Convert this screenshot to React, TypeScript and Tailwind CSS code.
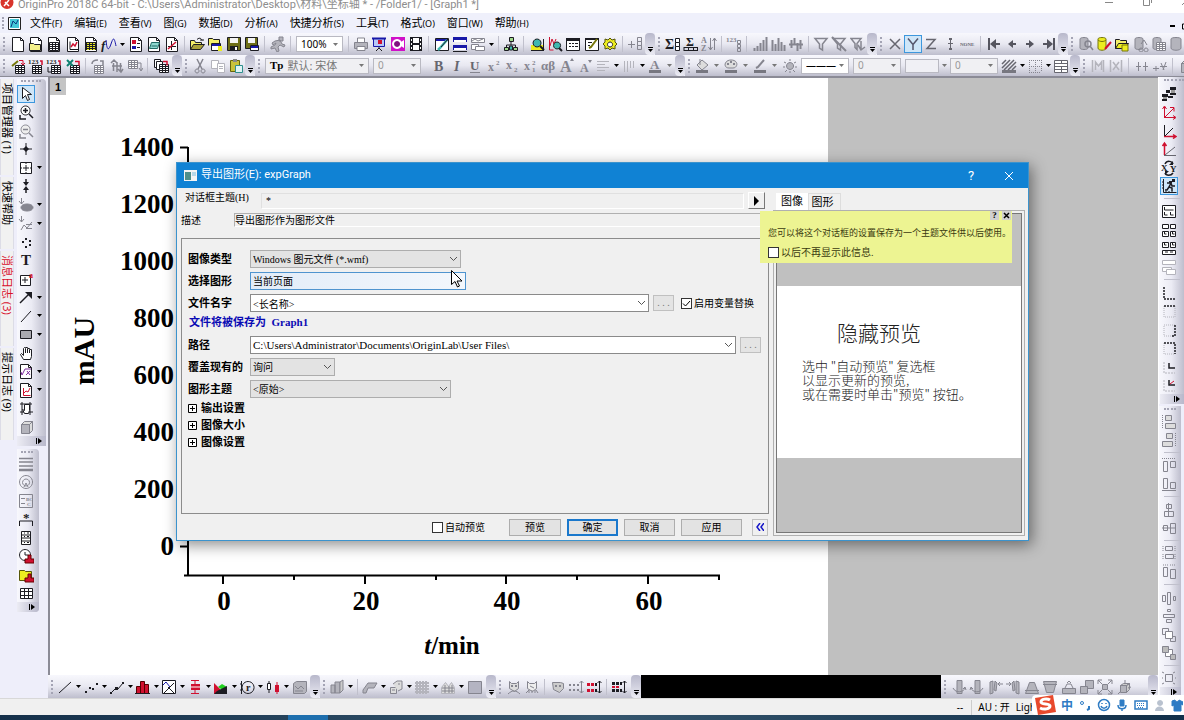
import type { ReactNode } from "react"
import clsx from "clsx"

type Shape = { d?: string; fill?: string; stroke?: string; w?: number; dash?: string; t?: string; x?: number; y?: number; size?: number; font?: string }

const K = "#1c1c22"
const G = "#85858f"
const L = "#b4b4bc"
const R = "#d01030"
const Y = "#ecec20"
const B = "#1818a8"
const T = "#3fb8b0"

// s = stroked path, f = filled path, t = a character
const s = (d: string, stroke = K, w = 1, dash?: string): Shape => ({ d, stroke, w, dash, fill: "none" })
const f = (d: string, fill = K, stroke = "none"): Shape => ({ d, fill, stroke })
const t = (text: string, x: number, y: number, size: number, fill = K, font = "bold"): Shape => ({ t: text, x, y, size, fill, font })

const page = (...more: Shape[]) => [f("M2.5 1.5h8l3 3v11h-11z", "#fff", K), s("M10.5 1.5v3h3"), ...more]
const table = (x: number, y: number, c = K) => [
  f(`M${x} ${y}h9v8h-9z`, "#fff", c),
  s(`M${x} ${y + 2}h9M${x} ${y + 4}h9M${x} ${y + 6}h9M${x + 3} ${y}v8M${x + 6} ${y}v8`, c),
]
const bars = (c: string) => [s("M2.5 15v-3M5.5 15v-5M8.5 15v-8M11.5 15v-11M14.5 15v-14", c, 2)]
const box = (x: number, y: number, w: number, h: number, fill = "none", c = G) => f(`M${x}.5 ${y}.5h${w}v${h}h-${w}z`, fill, c)
const funnel = s("M2 2.5h12l-4.5 5.5v6l-3-2v-4z", G, 1.5)
const lens = (c: string) => s("M13 8a3 3 0 1 1-6 0a3 3 0 1 1 6 0M12 10l3 4", c, 1.5)
const axes = (y: string, x: string) => [s("M3.5 14V3M1.5 5l2-3 2 3", y), s("M3 13.5h11M12 11.5l3 2-3 2", x)]

const icons: Record<string, Shape[]> = {
  project: page(),
  folder: page(f("M1.5 7.5h4l1 1h6v6h-11z", "#f4f08a", K)),
  worksheet: page(...table(3.5, 6.5)),
  graph: page(s("M5 5.5v8h8"), s("M6 11l2-3 2 2 2-4", R, 1.5)),
  matrix: page(f("M3 6h10v8h-10z", Y), s("M3.5 6v8M6.5 6v8M9.5 6v8M12.5 6v8M3 6.5h10M3 8.5h10M3 10.5h10M3 12.5h10")),
  func: [s("M5 4c1 12 3 10 5 4s3-8 5 2", B), t("f", 0, 14, 13, K, "italic bold")],
  layout: page(f("M4 4h4v4h-4z", R), f("M4 10h4v3h-4z", B), s("M9 7.5h3M9 11.5h3")),
  notes: page(f("M3.5 12.5l2-6h8l-2 6z", "#8fd8d0", "#216b66"), s("M5.5 10h6", "#216b66")),
  digitize: page(s("M7.5 5v9M4 10.5h8"), s("M4 13l8-7", R, 1.5)),
  open: [f("M1.5 13.5v-9h4l1 2h6v2", "#f3ee6a", K), f("M1.5 13.5l3-5h11l-4 5z", "#a9a03a", K), s("M8 3.5c3-3 5 0 5 1M11 4h4")],
  openTpl: [f("M1.5 9.5v-7h4l1 1h6v4", "#f3ee6a", K), f("M4.5 7.5h9v7h-9z", "#fff", K), f("M5 8h8v2h-8z", B), f("M11 10h4v5h-4z", Y)],
  save: [f("M1.5 1.5h13v13h-13z", "#6e6e18", K), f("M4 2h8v5h-8z", "#f3f3f3"), f("M4 10h8v5h-8z", K), f("M9 11h2v3h-2z", "#fff")],
  saveTpl: [f("M1.5 1.5h12v11h-12z", "#6e6e18", K), f("M4 2h7v5h-7z", "#f3f3f3"), f("M6.5 9.5h8v5h-8z", "#fff", K), f("M7 10h7v2h-7z", B)],
  runner: [f("M9 1h4v4h-4zM5 5l5-1 2 4 3 1-1 2-4-2-2 2 1 4-2 1-2-4-4 1v-2l4-2 1-2-3 2-1-2z", L, G)],
  print: [f("M4.5 6v-4h7v4", "#fff", G), f("M1.5 6.5h13v6h-13z", L, G), f("M4 10.5h8v4h-8z", "#fff", G)],
  slide: [f("M2.5 2.5h11v8h-11z", "#b8c8f8", B), s("M1 2.5h14", B, 2), s("M8 11v2M5 15l3-3 3 3"), f("M7 4h4v4h-4z", R)],
  movie: [f("M1 1h14v14h-14z", "#d010c8"), f("M7 3a5 5 0 1 0 .1 0z", "#fff"), f("M7 5a3 3 0 1 0 .1 0z", "#801080"), f("M11 6l3-2v8l-3-2z", "#fff")],
  film: [f("M2 1h12v14h-12z"), f("M5 2h6v5h-6zM5 9h6v5h-6zM3 3h1v2h-1zM3 7h1v2h-1zM3 11h1v2h-1zM12 3h1v2h-1zM12 7h1v2h-1zM12 11h1v2h-1z", "#fff")],
  edit: [f("M1.5 2.5h13v12h-13z", "#fff", K), f("M2 3h12v2h-12z", B), s("M13 4L6 12l-2 2", T, 2.5), s("M14 3L7 11")],
  split: [f("M1 1h14v5h-14zM1 9h14v5h-14z", B), f("M2 4h12v2h-12zM2 12h12v2h-12z", "#fff"), s("M1 15.5h14")],
  windows: [box(1, 2, 13, 4, "#fff"), box(1, 8, 7, 5, "#fff"), box(5, 10, 9, 4, "#fff"), s("M2 5l3-2 3 2 5-2", G)],
  tree: [s("M8 5v4M3.5 12V9h9v3"), f("M6.5 1.5h4v4h-4zM1.5 11.5h4v3h-4zM10.5 11.5h4v3h-4z", "#9fd88a", K), f("M6.5 10h3v4h-3z", T, K)],
  zoomData: [f("M2 9h13v5h-13z", Y), s("M2 14.5h13M14.5 3v12"), f("M8 3a4 4 0 1 0 .1 0z", T, K), s("M11 10l4 4", K, 2)],
  zoomGraph: [s("M2.5 1v13h4", R), s("M3 10l2-7 2 5 2-5", R), f("M10 6a3.5 3.5 0 1 0 .1 0z", T, K), s("M12 12l3 3", K, 2)],
  results: [f("M1.5 2.5h13v12h-13z", "#fff", K), f("M1 2h14v3h-14z"), s("M4 7.5h2M7 7.5h2M10 7.5h3M4 10.5h2M7 10.5h2M10 10.5h3")],
  script: [f("M1.5 2.5h13v12h-13z", "#fff", K), f("M1 2h14v2h-14z"), s("M13 3l-6 8-2 1", "#77770a", 2), s("M4 6.5h4M4 9.5h2")],
  gear: [f("M8 2l2 2 3-1v3l2 2-2 2v3l-3-1-2 2-2-2-3 1v-3l-2-2 2-2v-3l3 1z", Y, "#55550a"), f("M8 6a2.5 2.5 0 1 0 .1 0z", "#fff", K)],
  addCol: [s("M0 8.5h7M3.5 5v7", G), ...[1, 5, 9].map((y) => box(9, y, 4, 4))],
  sumCols: [t("Σ", 0, 13, 14), ...[2, 6, 10].map((y) => box(10, y, 4, 4, "#fff", K))],
  sumRows: [t("Σ", 3, 10, 12), s("M1 14.5h14M1 11.5h14M1 11v4M5.5 11v4M10.5 11v4M14.5 11v4")],
  sort: [t("A", 0, 7, 8, G), t("Z", 0, 15, 8, G), s("M9.5 2v12M7.5 11l2 3 2-3M13.5 14V2M11.5 5l2-3 2 3", G)],
  setVals: [t("123", 0, 6, 7, G), ...[4, 8, 12].map((y) => box(11, y, 3, 3))],
  stats1: bars(G),
  stats2: [s("M2.5 15V4M5.5 15v-7M8.5 15V2M11.5 15v-9M14.5 15v-6", G, 2)],
  stats3: [s("M1 8.5h14M3.5 4v8M6.5 2v7M9.5 7v8M12.5 4v9", G, 2)],
  filter: [funnel],
  filterOff: [funnel, s("M1 1l14 14", G, 2)],
  filterRun: [s("M1 2.5h10l-4 5v6l-2-2v-4z", G, 1.5), s("M11 5v8M8 9l3 5 4-3", G, 1.5)],
  x: [s("M3 3l10 10M13 3L3 13", "#66666f", 1.5)],
  y: [s("M3 2.5l5 6v5.5M13 2.5l-5 6", "#55556a", 1.5)],
  z: [s("M3 3.5h9L4 12.5h9", "#66666f", 1.5)],
  err: [s("M8.5 2v12M6 7.5h5", "#66666f"), f("M7 2h3v2h-3zM7 12h3v2h-3z", "#66666f")],
  none: [t("NONE", 0, 10, 5, "#66666f")],
  first: [s("M3 2v12M14 8H7", "#55555f", 2), f("M4 8l6-5v10z", "#55555f")],
  prev: [f("M4 8l5-4v3h3v2h-3v3z", "#55555f")],
  next: [f("M12 8l-5-4v3h-3v2h3v3z", "#55555f")],
  last: [s("M13 2v12M2 8h7", "#55555f", 2), f("M12 8l-6-5v10z", "#55555f")],
  db: [f("M2 3c0-2 8-2 8 0v9c0 2-8 2-8 0z", L, G), lens(G)],
  dbEdit: [f("M2 3c0-2 8-2 8 0v9c0 3-8 3-8 0z", Y, "#77770a"), s("M2 4c2 2 6 2 8 0", "#77770a"), s("M15 6l-6 7", R, 2)],
  dbOpen: [f("M1.5 12.5v-9h4l1 1h6v3", "#f3ee6a", K), f("M1.5 12.5l3-5h10l-3 5z", Y, K), f("M8 9h6v6h-6z", Y, "#77770a")],
  dbSql: [f("M2 3c0-2 8-2 8 0v9c0 2-8 2-8 0z", L, G), s("M8 12a2 2 0 1 0 .1 0M13 12a2 2 0 1 0 .1 0M8 8l3-4 3 5", G)],
  dbTable: [f("M2 3c0-2 8-2 8 0v9c0 2-8 2-8 0z", L, G), ...table(5.5, 6.5, G)],
  dbPlain: [f("M2 3c0-2 10-2 10 0v9c0 3-10 3-10 0z", L, G)],
  import1: [...table(5.5, 7.5), s("M2 8l6-5", "#77770a", 2), s("M9 2.5h4v4M11 5l2 2 2-2", R)],
  import2: [...table(4.5, 7.5), t("123", 0, 6, 7), s("M12 3h2v4", R, 1.5)],
  import3: [...table(5.5, 7.5), t("123", 0, 6, 7), s("M12 3h2v4", R, 1.5), s("M2 9v5h3")],
  importXl: [...table(5.5, 7.5), s("M2 2l6 6M8 2l-6 6", "#108070", 2), s("M10 3.5h4v4", R, 1.5)],
  reimp1: [...table(4.5, 7.5, G), s("M2 6c0-4 4-4 6-4M10 3h3v4", G, 1.5)],
  reimp2: [s("M3 8h10M4.5 5v8M8 4v10M11.5 5v8M2 5l3-3 3 3M9 11l3 3 2-3", G, 1.5)],
  reimp3: [...table(1.5, 2.5, G), s("M11 5h3v7M12 10l2 3 2-3", G)],
  batch: [box(1, 1, 6, 8, "#fff", K), box(3, 3, 6, 8, "#fff", K), ...table(6.5, 6.5), s("M10 3.5h4v4", R, 1.5)],
  cut: [s("M5 1l5 10M11 1L6 11", G, 1.5), s("M5 11a2 2 0 1 0 .1 0M11 11a2 2 0 1 0 .1 0", G)],
  copy: [box(1, 2, 7, 8, "#fff", L), box(7, 5, 7, 9, "#fff", L), s("M9 8.5h4M9 10.5h4", L)],
  paste: [f("M2.5 2.5h9v11h-9z", "#c9c23a", "#66660a"), f("M5 1h4v3h-4z", "#888"), f("M7.5 7.5h7v7h-7z", "#dff4f4", "#2f8f8f")],
  bold: [t("B", 3, 13, 14, "#66666f")],
  italic: [t("I", 5, 13, 14, "#66666f", "italic bold")],
  underline: [t("U", 3, 12, 13, "#66666f"), s("M3 14.5h10", G)],
  sup: [t("x", 2, 13, 12, G), t("2", 10, 7, 7, G)],
  sub: [t("x", 2, 11, 12, G), t("2", 10, 14, 7, G)],
  supsub: [t("x", 2, 12, 12, G), t("2", 10, 7, 7, G), t("1", 10, 14, 7, G)],
  greek: [t("αβ", 0, 12, 13, G)],
  bigger: [t("A", 1, 14, 16, G), f("M11 3l2-3 2 3z", G)],
  smaller: [t("A", 3, 14, 12, G), f("M11 2h4l-2 3z", G)],
  align: [s("M2 3.5h12M2 6.5h8M2 9.5h12M2 12.5h8", L)],
  valign: [s("M3.5 3v11M6.5 3v11M9.5 3v7M12.5 3v7", L)],
  fontColor: [t("A", 3, 11, 13, G), f("M2 12h12v3h-12z", "#777780")],
  fill: [f("M3 7l5-5 6 5-6 5z", "#ddd", G), s("M6 1v6", G), f("M2 12h12v3h-12z", "#777780")],
  palette: [f("M8 2c8 0 7 8 2 8h-4c-6 0-5-8 2-8z", "#ddd", G), s("M4 6h2M7 4h2M10 6h2", G, 2), f("M2 12h12v3h-12z", "#777780")],
  lineColor: [s("M12 2L6 9l-2 1", G, 2), f("M2 12h12v3h-12z", "#777780")],
  lamp: [f("M8 4.5a3.5 3.5 0 1 0 .1 0z", L, G), s("M8 1v2M2 4l2 1M14 4l-2 1M1 9h2M15 9h-2M3 14l2-2M13 14l-2-2M8 13v2", G)],
  hatch: [s("M1 6l4-4M1 10l8-8M3 12l10-10M7 12l8-8M11 12l4-4", "#66666f", 1.5), f("M1 12h14v3h-14z", "#777780")],
  border: [s("M2.5 2v12M8.5 2v12M14.5 2v12M2 2.5h12M2 8.5h12M2 14.5h12", G, 1, "1 1")],
  cells: [f("M1.5 2.5h13v12h-13z", "#fff", "#66666f"), s("M1 5.5h14M1 8.5h14M1 11.5h14M8.5 2v4M8.5 9v6", "#66666f")],
  mask1: [s("M2.5 2v12M13.5 2v12M5.5 12V4l3 4 3-4v8", L, 1.5)],
  mask2: [s("M2.5 2v12M13.5 2v12M5 4l6 8M11 4l-6 8", L, 1.5)],
  move1: [s("M4.5 4v9M2 8.5h5M11.5 4v9M9 8.5h5", G)],
  move2: [s("M1 10.5h6M4 8v5M8 8.5h7M9 5l3 7M14 4l-3 8", G)],
  // tools dock
  pointer: [f("M4.5 1.5v11l3-3 2 5 2-1-2-5h4z", "#fff", K)],
  zoomIn: [f("M7.5 2a4.5 4.5 0 1 0 .1 0z", "#fff", K), s("M5 6.5h5M7.5 4v5M11 10l4 4M2 11v4h6", K, 1.5)],
  zoomOut: [f("M7.5 2a4.5 4.5 0 1 0 .1 0z", "#eee", G), s("M5 6.5h5M11 10l4 4M2 11v4h6", G, 1.5)],
  reader: [s("M8 2v12M2 8h12"), f("M8 5l3 3-3 3-3-3z")],
  screen: [box(2, 2, 11, 11, "#fff", K), s("M5 8h6M8 5v6M2 8h2M12 8h2M8 2v2M8 12v2")],
  cursor: [f("M5 4h6l-3 4zM5 12h6l-3-4z"), s("M8 1v3M8 12v3", K, 1.5)],
  selArea: [f("M9 7c8 0 8 7 0 7s-8-7 0-7z", G, G), s("M3.5 1v6M1 4l2.5 3L6 4", G)],
  maskArea: [s("M3.5 1v6M1 4l2.5 3L6 4", G), s("M3 15l3-5 3 3 5-6M8 9.5h6M8 13.5h6", G)],
  draw: [f("M4 7h2v2h-2zM7 4h2v2h-2zM11 6h2v2h-2zM11 10h2v2h-2zM7 12h2v2h-2z")],
  text: [t("T", 3, 13, 15)],
  annotate: [box(2, 4, 10, 10, "#fff", K), s("M4 9h6M7 6v6"), t("a", 11, 7, 8, R)],
  arrow: [s("M2 14L12 4", K, 1.5), f("M7 3h7v7z")],
  line: [s("M3 14L13 3")],
  rect: [f("M2.5 4.5h11v8h-11z", "#aaaab0", K)],
  hand: [f("M5.5 14.5l-3-5 1-1 2 2v-7l1-1 1 1v-1h2v1h2v1h2v7l-1 3z", "#fff", K), s("M7.5 4v4M9.5 4v4M11.5 5v3")],
  formula: page(s("M3 9l1 3 3-6h6", "#8030a0"), s("M8 12l4-4M9 8l3 4", "#8030a0")),
  newGraph: page(s("M5.5 6v7.5h7", R), s("M6 11l2-2 2 1 2-4", R)),
  pan: [s("M2 4h12M2 12h13M4 2v13M12 2v13"), f("M6.5 13.5l-2-4 2 1v-6h5v6l-1 3z", "#fff", K)],
  cube: [f("M3.5 5.5h8v9h-8z", L, G), f("M3.5 5.5l3-3h8l-3 3zM11.5 5.5l3-3v9l-3 3z", "#ddd", G)],
  lines: [s("M1 2.5h14M1 6h14M1 10h14", G, 1.5), s("M1 14h14", G, 2.5)],
  ring: [s("M8 1.5a6.500 6.500 0 1 0 .1 0M8 5a3.500 3.500 0 1 0 .1 0M6 13l2-4 2 4", G)],
  legend: [box(1, 1, 13, 13), s("M3 5.5h4M3 10.5h4", G), t("BC", 8, 8, 5, G), t("C", 9, 13, 5, G)],
  bracket: [t("*", 5, 11, 13), s("M1.5 15v-5h13v5")],
  colorScale: [box(3, 1, 9, 13, "#fff", K), s("M3 5h10M3 8h10M3 11h10M6 3h1M9 3h2M6 6.5h1M9 6.5h2M6 12.5h1M9 12.5h2")],
  clock: [f("M7 1.5a5.500 5.500 0 1 0 .1 0z", "#fff", K), s("M7 4v3h3"), f("M10 7h3v4h3v4h-9v-4h3z", R, "#600")],
  stamp: [f("M1.5 3.5h5l1 1h6v9h-12z", Y, "#55550a"), f("M10 7h3v4h3v4h-9v-4h3z", R, "#600")],
  newTable: [f("M2.5 3.5h12v10h-12z", "#fff", K), s("M2 6.5h12M2 10.5h12M6.5 3v10M10.5 3v10")],
  // right dock
  antialias: [f("M9 1h6v3h-6zM5 4h4v3h-4zM9 7h6v2h-6zM1 8h6v3h-6zM7 10h5v2h-5zM1 13h5v2h-5z"), f("M10 4h4v3h-4zM2 11h4v2h-4z", "#999")],
  axis1: [...axes(R, R), s("M4 13l9-9M9 3.500h4v4", R)],
  axis2: [s("M3.5 2v12"), s("M3 13.5h11M12 11.5l3 2-3 2", R, 1.5), s("M4 13l8-8")],
  axis3: [s("M3.5 14V3M1.5 5l2-3 2 3", R, 1.5), s("M3 14.5h12M4 14l10-8", "#66666f")],
  exchange: [t("X", 0, 11, 9), t("Y", 9, 12, 9), s("M4 4c2-4 7-3 8 0M12 13c-2 3-7 3-8 0", K, 1.5), f("M12 1v4h-4zM4 15v-4h4z")],
  speed: [s("M2.5 1v13.5h13"), s("M1 4h2M1 7h2M1 10h2M5 13v2M8 13v2M11 13v2"), f("M11 1h3v3h-3zM8 3h3v2h-3z"), s("M6 5h4l-2 4 3 1v3M8 9l-2 3h-2M10 5l1 3h3", K, 1.5)],
  layer1: [box(1, 2, 13, 12, "#fff", K), s("M3.5 4v3h9M3.5 9v3h3M9.5 9v3h3", K)],
  layer2: [box(1, 2, 6, 4, "#fff", K), box(9, 2, 5, 4, "#fff", K), box(1, 9, 6, 5, "#fff", K), box(9, 9, 5, 5, "#fff", K), s("M3.5 10v2h2M11.5 10v2h2")],
  layer3: [box(1, 2, 6, 5, "#fff", K), box(9, 2, 5, 5, "#fff", K), box(1, 10, 13, 4, "#fff", K), s("M3.5 3v2h2M11.5 3v2h2M4 12h3M9 12h3")],
  layer4: [box(1, 1, 13, 4, "#fff", L), box(1, 8, 9, 4, "#fff", L), box(5, 10, 9, 5, "#fff", L)],
  addL: [s("M3 2v12h12", K, 1.5, "2 1")],
  addT: [s("M3 3v11h11V3", L, 1, "1 1"), s("M3 3h12", K, 1.5, "2 1")],
  addR: [s("M14 3H3v11h9", L, 1, "1 1"), s("M14 3v11h-3", K, 1.5, "2 1")],
  addBox: [s("M3 3v11h11", L, 1, "1 1"), s("M3 3h11v11", K, 1.5, "2 1")],
  addInset: [s("M3 3v11h11", L, 1, "2 1"), s("M8 4v5h6", K, 1.5)],
  addInset2: [s("M3 3v11h11", L, 1, "2 1"), s("M8 3v5h6", K, 1.5), s("M9 7l4-3", R)],
  alignL: [box(4, 1, 6, 5, "#ddd"), box(4, 9, 10, 5, "#ddd"), s("M1.5 1v14", G, 1, "1 1")],
  alignR: [box(5, 1, 6, 5, "#ddd"), box(1, 9, 10, 5, "#ddd"), s("M14.5 1v14", G, 1, "1 1")],
  alignT: [box(2, 4, 4, 10), box(9, 4, 5, 6), s("M1 1.5h14", G, 1, "1 1")],
  alignB: [box(2, 2, 4, 10), box(9, 6, 5, 6), s("M1 14.5h14", G)],
  alignH: [box(5, 2, 5, 4), box(3, 9, 9, 5), s("M7.5 1v14", G)],
  alignV: [box(2, 5, 4, 5), box(9, 3, 5, 10), s("M1 8h14", G)],
  sameW: [box(4, 1, 7, 4), box(4, 9, 8, 4), s("M2 1v5M2 9v5M14 1v5M14 9v5", G, 1, "1 1")],
  sameH: [box(2, 3, 4, 9), box(9, 5, 5, 9), s("M2 1h5M9 1h5", G, 1, "1 1")],
  distH: [box(1, 5, 3, 6), box(6, 2, 3, 12), box(12, 6, 2, 4)],
  distV: [box(6, 1, 3, 2), box(2, 6, 11, 3), box(5, 11, 5, 3)],
  front: [box(1, 1, 6, 6), box(9, 9, 5, 5), box(4, 4, 7, 7, "#fff")],
  back: [box(4, 4, 7, 7, "#fff"), box(1, 1, 6, 6, "#bbb"), box(9, 9, 5, 5, "#bbb")],
  group: [box(4, 4, 7, 7), s("M1 2l2 1M14 2l-2 1M1 14l2-1M14 14l-2-1M1 8h1M14 8h1", G)],
  // plot bar
  pLine: [s("M2 14L14 3")],
  pDots: [f("M2 12h2v2h-2zM6 8h2v2h-2zM9 9h2v2h-2zM13 4h2v2h-2z")],
  pBoth: [s("M2 14l5-5 2 1 5-6"), f("M1 13h2v2h-2zM6 8h3v3h-3zM13 3h2v2h-2z")],
  pCol: [f("M1.5 7.5h4v7h-4zM5.500 2.500h4v12h-4zM9.500 5.500h4v9h-4z", R, "#500"), s("M0 14.5h15")],
  pMulti: [f("M1.5 1.5h13v13h-13z", "#fff", K), s("M2 6l3-3 4 5 4-4", B), s("M3 14l10-10M7 8l6 6")],
  pBox: [s("M8 1v14M4 1.5h8M4 14.5h8", R), f("M4 5h9v6h-9z", R), s("M4 8h9", "#fff")],
  pArea: [f("M1 4l6 6v5h-6z", R), f("M5 8l4-3 5 3-3 4z", "#20d020"), f("M4 12l10-5v8h-13z")],
  pPolar: [s("M2.5 2v13M1 5h2M1 11h2M9 2.5a6 6 0 1 0 .1 0"), t("r", 7, 12, 10)],
  pStock: [f("M2.5 4.5h3v6h-3z", "#fff", K), s("M4 2v3M4 11v3"), s("M12 3v12", R), f("M10 6h4v7h-4z", R)],
  pTpl: [f("M1.5 4.5l3-2h10v10l-2 2h-11z", L, G), s("M3 7l3 3 3-3 3 3M3 12h8", G)],
  p3d: [f("M2 6h4v8h-4zM6 3h5v11h-5z", L, G), f("M11 3l3-2v10l-3 3z", "#ccc", G)],
  p3dRibbon: [f("M1 11l5-7h9l-3 5h-6l-2 5h-3z", L, G)],
  p3dSurf: [f("M2.500 8.500h6v6h-6z", "#ddd", G), f("M5 5l4-3h5v8l-4 2", "#ddd", G), s("M4 11h3M10 5h2", G)],
  p3dGrid: [s("M1 4h14M1 7h14M1 10h14M1 13h14M3 2v13M6 2v13M9 2v13M12 2v13", L, 2)],
  pHeat: [f("M1.500 14.500v-6l4-5 3 4 3-4 3 5v6z", "#ddd", L), s("M2 9h12M2 12h12M5 6v8M9 7v7M12 6v8", G)],
  pImage: [f("M1.500 2.500h13v12h-13z", "#b4b4c2", G)],
  m1: [f("M3.500 2.500l2 2h5l2-2v7l-4 3-5-3z", "#ddd", G), f("M5 6h2v2h-2zM9 6h2v2h-2z", G), s("M2 15c4-4 8-4 12 0", G)],
  m2: [f("M3.500 2.500l2 2h5l2-2v7l-4 3-5-3z", "#eee", G), s("M2 14l3-3M5 14v-3M8 14v-3M11 14v-3M14 14l-2-3M6 7l4 2", G)],
  m3: [f("M2.500 3.500h8l3 1v5l-4 4-6-3z", "#ccc", G), f("M5 6h2v2h-2zM9 6h2v2h-2z", G)],
  m4: [f("M1 5h2v2h-2zM5 5h2v2h-2zM9 5h2v2h-2zM1 10h2v2h-2zM5 10h2v2h-2zM9 10h2v2h-2z", G), s("M13.500 2v12M11.500 4l2-2 2 2M11.500 12l2 2 2-2", G)],
  m5: [f("M1 4h3v3h-3zM5 4h3v3h-3zM1 10h3v3h-3zM5 10h3v3h-3z", R), f("M9 4h2v3h-2zM9 10h2v3h-2z"), s("M13.500 2v12M11.500 4l2-2 2 2M11.500 12l2 2 2-2")],
  m6: [f("M1 7h3v2h-3zM5 7h3v2h-3z", R), f("M1 3h3v3h-3zM5 3h3v3h-3zM1 10h3v3h-3zM5 10h3v3h-3zM9 3h2v3h-2zM9 10h2v3h-2z"), s("M13.500 2v12M11.500 4l2-2 2 2M11.500 12l2 2 2-2")],
  r1: [f("M6 1.500h5v13h-5z", L, G), s("M2 9c3 6 11 4 12 0M12 10l2-2 1 3", G)],
  r2: [f("M6 1.500h5v13h-5z", L, G), s("M14 9c-3 6-11 4-12 0M1 11l1-3 2 2", G)],
  r3: [f("M3 3l3-1v12l-3 1z", L, G), f("M8 2l2 2-1 8-2-1z", L, G), s("M16 5h-5M13 3l-2 2 2 2", G)],
  r4: [f("M13 3l-3-1v12l3 1z", L, G), f("M8 2l-2 2 1 8 2-1z", L, G), s("M0 5h5M3 3l2 2-2 2", G)],
  r5: [f("M1.500 14.500l4-11h5l4 11z", L, G), s("M1 11.500h14", G)],
  r6: [f("M1.500 2.500h13l-3 11h-7z", L, G), s("M1 5.500h14", G)],
  r7: [f("M1.500 9.500h13v5h-13z", L, G), s("M4 9l2-4h4l2 4M6 4l2-2 2 2", G)],
  r8: [f("M6.500 1.500h8v8h-8z", L, G), f("M1.500 7.500h7v7h-7z", L, G)],
  r9: [f("M5.500 5.500h5v5h-5z", L, G), s("M1 1l4 4M15 1l-4 4M1 15l4-4M15 15l-4-4M1 5V1h4M11 1h4v4M1 11v4h4M11 15h4v-4", G)],
  r10: [f("M4.500 6.500h6v7h-6z", L, G), f("M4.500 6.500l3-2h6l-3 2zM10.500 6.500l3-2v6l-3 3z", "#ccc", G), s("M9 1v4M12 9l3-1M4 13l-2 2", G)],
}

function Icon({ name }: { name: string }) {
  return (
    <svg viewBox="0 0 16 16" className="h-4 w-4 shrink-0" aria-hidden="true">
      {icons[name].map((p, i) =>
        p.t ? (
          <text key={i} x={p.x} y={p.y} fontSize={p.size} fill={p.fill} fontFamily="Liberation Serif" fontWeight="700" fontStyle={p.font?.includes("italic") ? "italic" : "normal"}>
            {p.t}
          </text>
        ) : (
          <path key={i} d={p.d} fill={p.fill} stroke={p.stroke} strokeWidth={p.w ?? 1} strokeDasharray={p.dash} />
        ),
      )}
    </svg>
  )
}

function Caret({ className = "text-black" }: { className?: string }) {
  return (
    <svg viewBox="0 0 5 3" className={clsx("h-[3px] w-[5px] shrink-0 fill-current", className)} aria-hidden="true">
      <path d="M0 0h5L2.5 3z" />
    </svg>
  )
}

function Chevron() {
  return (
    <svg viewBox="0 0 9 6" className="pointer-events-none absolute top-1/2 right-[3px] h-[6px] w-[9px] -translate-y-1/2 fill-none stroke-[#555]" aria-hidden="true">
      <path d="M1 1l3.5 3.5L8 1" />
    </svg>
  )
}

// "|" draws a separator, a trailing "+" adds a drop arrow ("++" a wider one) and "!" marks the pressed button
function Tools({ items, vertical = false }: { items: string; vertical?: boolean }) {
  return (
    <div className={clsx("flex shrink-0", vertical ? "flex-col" : "items-center")}>
      {items.split(" ").map((item, i) => {
        if (item === "|") {
          return <span key={i} className={vertical ? "my-[3px] ml-1 h-px w-4 bg-[#c0c0cc]" : "mx-[3px] h-4 w-px bg-[#c0c0cc]"} />
        }
        const name = item.replace(/[+!]/g, "")
        const drop = item.includes("+")
        const wide = item.includes("++")
        return (
          <button
            key={i}
            type="button"
            aria-label={name}
            className={clsx(
              "flex shrink-0 items-center",
              vertical && "w-[26px] pl-px odd:h-[19px] even:h-[18px]",
              !vertical && "h-[19px]",
              !vertical && !drop && "w-[18px] justify-center nth-[3n+1]:w-[19px]",
              !vertical && drop && (wide ? "w-[29px] pl-px" : "w-[26px] pl-px"),
            )}
          >
            <span className={clsx("flex", item.includes("!") && "bg-[#cfe6f8] outline outline-[#3d97dd]")}>
              <Icon name={name} />
            </span>
            {drop && <Caret className={wide ? "ml-1 text-[#777]" : "ml-[3px] text-black"} />}
          </button>
        )
      })}
    </div>
  )
}

function Bar({ children, className, cap = true }: { children: ReactNode; className?: string; cap?: boolean }) {
  return (
    <div className={clsx("flex h-full shrink-0 items-center rounded-r-sm bg-linear-to-b from-[#f8f8fd] via-[#e8e8f1] to-[#bebecd]", className)}>
      <span className="mr-[3px] ml-[3px] h-[14px] border-l-2 border-dotted border-[#a4a4b4]" />
      {children}
      {cap && (
        <button type="button" aria-label="toolbar options" className="flex h-full w-[10px] shrink-0 flex-col items-center justify-end gap-px rounded-sm bg-linear-to-b from-[#b8b8cb] to-[#ececf4] pb-[3px]">
          <span className="h-px w-[5px] bg-black" />
          <Caret />
        </button>
      )}
    </div>
  )
}

function SideCap() {
  return (
    <button type="button" aria-label="toolbar options" className="flex h-[10px] w-full items-center justify-end gap-px bg-linear-to-r from-[#ececf4] to-[#b8b8cb] pr-1">
      <span className="h-[6px] w-px bg-black" />
      <span className="h-0 w-0 border-y-[3px] border-l-4 border-y-transparent border-l-black" />
    </button>
  )
}

function Combo({ value, label, className, icon }: { value: string; label: string; className: string; icon?: ReactNode }) {
  return (
    <span className={clsx("relative mx-[2px] flex h-4 shrink-0 items-center border border-[#b9b9c2]", className)}>
      {icon}
      <select aria-label={label} className="h-full w-full appearance-none bg-transparent pl-1 leading-[13px]">
        <option>{value}</option>
      </select>
      <Caret className="pointer-events-none absolute right-1 text-[#777]" />
    </span>
  )
}

const menus = [
  ["文件", "F"],
  ["编辑", "E"],
  ["查看", "V"],
  ["图", "G"],
  ["数据", "D"],
  ["分析", "A"],
  ["快捷分析", "S"],
  ["工具", "T"],
  ["格式", "O"],
  ["窗口", "W"],
  ["帮助", "H"],
]

const dockTabs = [
  { text: "项目管理器 (1)", height: "h-[96px]", color: "text-black" },
  { text: "快速帮助", height: "h-[72px]", color: "text-black" },
  { text: "消息日志 (3)", height: "h-[95px]", color: "text-[#d8102c]" },
  { text: "提示日志 (9)", height: "h-[92px]", color: "text-black" },
]

function Plot() {
  const yTicks = [1400, 1200, 1000, 800, 600, 400, 200, 0]
  const xTicks = [
    { v: 0, x: 173 },
    { v: 20, x: 315 },
    { v: 40, x: 456 },
    { v: 60, x: 598 },
  ]
  return (
    <svg viewBox="0 0 778 596" className="h-[596px] w-[778px]" fontFamily="Liberation Serif, serif" fontWeight="700">
      <path d="M138 69v429M134 497.5h536" fill="none" stroke="#000" strokeWidth="2" />
      {yTicks.map((v, i) => (
        <g key={v}>
          <path d={`M130 ${69.5 + i * 57}h8`} stroke="#000" strokeWidth="2" />
          <text x="124" y={78 + i * 57} fontSize="27" textAnchor="end">
            {v}
          </text>
        </g>
      ))}
      {xTicks.map(({ v, x }) => (
        <g key={v}>
          <path d={`M${x} 498v8M${x + 71} 498v4`} stroke="#000" strokeWidth="2" />
          <text x={x + 1} y="532" fontSize="27" textAnchor="middle">
            {v}
          </text>
        </g>
      ))}
      <text x="402" y="576" fontSize="25" textAnchor="middle">
        <tspan fontStyle="italic">t</tspan>/min
      </text>
      <text transform="translate(44 273) rotate(-90)" fontSize="30" textAnchor="middle">
        mAU
      </text>
    </svg>
  )
}

function Field({ label, id, children }: { label: string; id: string; children: ReactNode }) {
  return (
    <div className="flex h-[22px] items-center">
      <label htmlFor={id} className="w-[62px] shrink-0 text-[11px] font-bold">
        {label}
      </label>
      {children}
    </div>
  )
}

function Select({ id, value, className }: { id: string; value: string; className: string }) {
  return (
    <span className={clsx("relative", className)}>
      <select id={id} className="block h-[18px] w-full appearance-none border border-[#adadad] bg-[#e3e3e3] pl-[2px] text-[10px]">
        <option>{value}</option>
      </select>
      <Chevron />
    </span>
  )
}

function EditCombo({ id, value, className }: { id: string; value: string; className: string }) {
  return (
    <span className={clsx("relative", className)}>
      <input id={id} defaultValue={value} className="block h-[18px] w-full border border-[#8a8a8a] bg-white pl-[2px]" />
      <Chevron />
    </span>
  )
}

function Browse({ label }: { label: string }) {
  return (
    <button type="button" aria-label={label} className="ml-1 h-[16px] w-[21px] border border-[#c0c0c0] bg-[#e4e4e4] text-[10px] leading-[10px] text-[#777]">
      . . .
    </button>
  )
}

function CheckBox({ text, checked = false }: { text: string; checked?: boolean }) {
  return (
    <label className="flex items-center gap-[2px] text-[10px]">
      <span className="relative flex">
        <input type="checkbox" defaultChecked={checked} className="peer h-[11px] w-[11px] appearance-none border border-[#333] bg-white" />
        <svg viewBox="0 0 11 11" className="pointer-events-none absolute h-[11px] w-[11px] fill-none stroke-black opacity-0 peer-checked:opacity-100" aria-hidden="true">
          <path d="M2 5.5l2.5 2.5L9 3" />
        </svg>
      </span>
      {text}
    </label>
  )
}

const pushButton = "h-[17px] border border-[#adadad] bg-[#e3e3e3] text-[10px] leading-[15px]"

function ExportDialog() {
  return (
    <div role="dialog" aria-label="导出图形" className="absolute top-[162px] left-[176px] flex h-[379px] w-[853px] flex-col border border-[#3b93cd] bg-[#f0f0f0] text-black shadow-[3px_4px_14px_rgba(0,0,0,0.45)] font-['Liberation_Serif','Noto_Sans_CJK_SC',serif]">
      <header className="flex h-[25px] shrink-0 items-center bg-[#1082d4] pl-[7px] font-['Roboto','Noto_Sans_CJK_SC',sans-serif] text-[11px] text-white">
        <svg viewBox="0 0 13 11" className="mr-1 h-[11px] w-[13px]" aria-hidden="true">
          <path d="M0 0h13v11H0z" fill="#f4f4f4" />
          <path d="M1 2h6v8H1z" fill="#4f8f8a" />
          <path d="M8 2h4v4H8z" fill="#b8d8e8" />
        </svg>
        <h2>导出图形(E): expGraph</h2>
        <button type="button" aria-label="帮助" className="ml-auto w-[38px] text-[13px]">
          ?
        </button>
        <button type="button" aria-label="关闭" className="flex w-[38px] justify-center">
          <svg viewBox="0 0 10 10" className="h-[10px] w-[10px] stroke-white">
            <path d="M1 1l8 8M9 1l-8 8" />
          </svg>
        </button>
      </header>

      <div className="flex min-h-0 flex-1">
        <div className="flex w-[592px] flex-col pl-1">
          <div className="flex h-[25px] items-center pl-1 text-[10px]">
            <label htmlFor="theme" className="w-[76px] self-start pt-[2px]">
              对话框主题(H)
            </label>
            <input id="theme" defaultValue="*" className="h-[16px] w-[483px] border border-[#e0e0e0] border-r-white border-b-white bg-[#f0f0f0] pl-1" />
            <button type="button" aria-label="主题菜单" className="ml-1 flex h-[17px] w-[17px] items-center justify-center border border-white border-r-[#777] border-b-[#777]">
              <span className="h-0 w-0 border-y-[5px] border-l-[5px] border-y-transparent border-l-black" />
            </button>
          </div>
          <div className="flex h-[25px] items-start text-[10px]">
            <label htmlFor="desc" className="w-[53px]">
              描述
            </label>
            <input id="desc" defaultValue="导出图形作为图形文件" className="h-[14px] flex-1 border border-[#b0b0b0] border-r-white border-b-white bg-[#f0f0f0]" />
          </div>

          <div className="flex flex-1 flex-col border border-[#8c8c8c] pt-[9px] pl-[6px]">
            <Field label="图像类型" id="type">
              <Select id="type" value="Windows 图元文件 (*.wmf)" className="w-[211px]" />
            </Field>
            <Field label="选择图形" id="which">
              <select id="which" className="h-[18px] w-[216px] appearance-none border border-[#4f94cf] bg-linear-to-r from-[#e2ecf8] to-[#f3f7fc] pl-[2px] text-[10px]">
                <option>当前页面</option>
              </select>
            </Field>
            <Field label="文件名字" id="filename">
              <EditCombo id="filename" value="<长名称>" className="w-[399px] text-[10px]" />
              <Browse label="浏览文件名" />
              <span className="ml-[7px]">
                <CheckBox text="启用变量替换" checked />
              </span>
            </Field>
            <p className="h-5 pl-px text-[11px] leading-[16px] font-bold text-[#0a0ab4]">文件将被保存为&nbsp; Graph1</p>
            <Field label="路径" id="path">
              <EditCombo id="path" value={"C:\\Users\\Administrator\\Documents\\OriginLab\\User Files\\"} className="w-[486px] text-[11px]" />
              <Browse label="浏览路径" />
            </Field>
            <Field label="覆盖现有的" id="overwrite">
              <Select id="overwrite" value="询问" className="w-[85px]" />
            </Field>
            <Field label="图形主题" id="gtheme">
              <Select id="gtheme" value="<原始>" className="w-[201px]" />
            </Field>
            {["输出设置", "图像大小", "图像设置"].map((name) => (
              <button key={name} type="button" className="flex h-[17px] items-center gap-1 text-[11px] font-bold">
                <svg viewBox="0 0 9 9" className="h-[9px] w-[9px] fill-white stroke-black" aria-hidden="true">
                  <path d="M.5.5h8v8h-8zM2 4.500h5M4.500 2v5" />
                </svg>
                {name}
              </button>
            ))}
          </div>

          <div className="flex h-[26px] shrink-0 items-center justify-end gap-[6px] pr-px">
            <span className="mr-[18px]">
              <CheckBox text="自动预览" />
            </span>
            <button type="button" className={clsx(pushButton, "w-[52px]")}>预览</button>
            <button type="button" className="h-[17px] w-[51px] border-2 border-[#1a78cc] bg-[#e3e3e3] text-[10px] leading-[13px]">确定</button>
            <button type="button" className={clsx(pushButton, "w-[51px]")}>取消</button>
            <button type="button" className={clsx(pushButton, "w-[61px]")}>应用</button>
            <button type="button" aria-label="收起" className="ml-1 flex h-[17px] w-4 items-center justify-center border border-[#c0c0c0]">
              <svg viewBox="0 0 8 8" className="h-2 w-2 fill-none stroke-[#1616c8]">
                <path d="M4 0L1 4l3 4M8 0L5 4l3 4" strokeWidth="1.5" />
              </svg>
            </button>
          </div>
        </div>

        <div className="flex flex-1 flex-col pt-[5px] pr-[3px] pb-1 pl-1">
          <div role="tablist" className="flex h-[17px] pl-[3px] text-[11px] leading-[15px]">
            <button type="button" role="tab" aria-selected="true" className="w-[32px] bg-white">图像</button>
            <button type="button" role="tab" aria-selected="false" className="w-[33px] border border-b-0 border-[#ddd] pr-1">图形</button>
          </div>
          <div className="flex flex-1 flex-col border border-[#b0b0b0] p-[2px]">
            <div className="flex flex-1 flex-col border border-[#777] bg-[#c0c0c0] pt-[72px]">
              <div className="h-[172px] bg-white font-['Noto_Sans_CJK_SC',sans-serif] text-[#222]">
                <p className="pt-[30px] pl-[60px] text-[21px] leading-8 font-light">隐藏预览</p>
                <p className="pt-[11px] pl-[25px] text-[13px] leading-[14px] font-light whitespace-pre">{'选中 "自动预览" 复选框\n以显示更新的预览,\n或在需要时单击"预览" 按钮。'}</p>
              </div>
            </div>
          </div>
        </div>
      </div>

      <aside className="absolute top-[48px] left-[583px] flex h-[52px] w-[252px] flex-col bg-[#edf492] pl-2 text-[#3a3a10]">
        <div className="flex h-[16px] justify-end gap-[3px] text-black">
          <button type="button" aria-label="提示帮助" className="h-[9px] w-[9px] bg-[#d0d0d0] text-[9px] leading-[9px] font-bold">?</button>
          <button type="button" aria-label="关闭提示" className="mr-px flex h-[9px] w-[9px] items-center justify-center bg-[#d0d0d0]">
            <svg viewBox="0 0 7 7" className="h-[7px] w-[7px] stroke-black" aria-hidden="true">
              <path d="M1 1l5 5M6 1L1 6" strokeWidth="1.5" />
            </svg>
          </button>
        </div>
        <p className="h-[18px] text-[9px] leading-[13px] whitespace-nowrap">您可以将这个对话框的设置保存为一个主题文件供以后使用。</p>
        <CheckBox text="以后不再显示此信息." />
      </aside>

      <svg viewBox="0 0 12 18" className="absolute top-[107px] left-[274px] h-[18px] w-3" aria-hidden="true">
        <path d="M.5.500v14l3.500-3 2.500 5.500 2-1-2.500-5H11z" fill="#fff" stroke="#000" />
      </svg>
    </div>
  )
}

function InputMethodBar() {
  return (
    <div className="absolute right-0 bottom-[5px] flex h-[20px] w-[152px] items-center gap-1 rounded-l bg-white pl-px text-[#2f7cc4]">
      <svg viewBox="0 0 24 22" className="h-[22px] w-6 shrink-0" aria-hidden="true">
        <path d="M2 4l18-3 3 17-18 3z" fill="#e8492c" />
        <path d="M17 6c-3-2-9-1-9 2s9 1 9 4-6 4-10 2" fill="none" stroke="#fff" strokeWidth="3" />
      </svg>
      <span className="font-['Noto_Sans_CJK_SC',sans-serif] text-[12px] font-bold">中</span>
      <svg viewBox="0 0 106 14" className="h-[14px] w-[106px] shrink-0 fill-none stroke-current" aria-hidden="true">
        <circle cx="5" cy="5" r="1.5" />
        <path d="M12 8v3l-2 1" strokeWidth="2" />
        <circle cx="27" cy="7" r="5.500" strokeWidth="1.5" />
        <path d="M24 8c1 3 5 3 6 0M25 5v1M29 5v1" strokeWidth="1.5" />
        <path d="M43 2h4v6h-4z" fill="currentColor" />
        <path d="M41 7c0 5 8 5 8 0M45 11v2" strokeWidth="1.5" />
        <path d="M58 3h12v8H58z" strokeWidth="1.5" />
        <path d="M60 5.500h8M60 7.500h8M61 9.500h6" strokeDasharray="1 1" />
        <path d="M83 2a3 3 0 1 0 .1 0zM78 13c0-6 9-6 9 0z" fill="#b9c2cf" stroke="none" />
        <path d="M95 3l3-1c1 2 3 2 4 0l4 2v3l-2-1v7h-7V7l-2 1z" fill="currentColor" />
      </svg>
    </div>
  )
}

export default function App() {
  return (
    <div className="relative flex h-screen flex-col overflow-hidden bg-[#eeeefa] font-['Noto_Sans','Noto_Sans_CJK_SC',sans-serif] text-black">
      {/* Title bar */}
      <header className="flex h-[13px] shrink-0 items-start bg-white font-['Roboto','Noto_Sans_CJK_SC',sans-serif] text-[11px] leading-[9px] text-[#8d8d8d]">
        <svg viewBox="0 0 14 10" className="mr-1 h-[10px] w-[14px]" aria-hidden="true">
          <circle cx="7" cy="2.500" r="6.500" fill="#d8342c" />
          <path d="M4 6l5-6M5 2l4 4" stroke="#fff" strokeWidth="1.5" />
        </svg>
        <h1 className="whitespace-nowrap">{"OriginPro 2018C 64-bit - C:\\Users\\Administrator\\Desktop\\材料\\坐标轴 * - /Folder1/ - [Graph1 *]"}</h1>
        <svg viewBox="0 0 84 8" className="ml-auto h-2 w-[84px] fill-none stroke-[#888]" aria-hidden="true">
          <path d="M5 2.500h8M43.500 0v5.500h6V0M51.500 0v3M82 5l2-2" />
        </svg>
      </header>

      {/* Menu bar */}
      <nav className="flex h-5 shrink-0 items-center bg-[#eff0fb]">
        <span className="ml-[2px] h-3 border-l-2 border-dotted border-[#a4a4b4]" />
        <svg viewBox="0 0 13 13" className="mr-[9px] ml-1 h-[13px] w-[13px]" aria-hidden="true">
          <path d="M.5.500h12v12H.500z" fill="#fff" stroke="#222" />
          <path d="M2 2h9v9H2z" fill="#45c8d8" />
          <path d="M3 10l2-6 3 3 2-4" fill="none" stroke="#0a3a80" />
        </svg>
        <div className="flex gap-3">
          {menus.map(([name, key]) => (
            <button key={key} type="button" className="flex items-baseline text-[11px] leading-4">
              {name}
              <span className="text-[9px]">({key})</span>
            </button>
          ))}
        </div>
        <svg viewBox="0 0 16 10" className="mt-[6px] ml-auto h-[10px] w-4 fill-none stroke-black" aria-hidden="true">
          <path d="M2 5h5" strokeWidth="2" />
          <path d="M14.500 3h3v5h-3z" />
        </svg>
      </nav>

      {/* Toolbars */}
      <div className="flex h-[22px] shrink-0 overflow-hidden">
        <Bar>
          <Tools items="project folder worksheet graph matrix func+ layout notes digitize | open openTpl save saveTpl | runner |" />
          <Combo label="缩放" value="100%" className="w-[47px] bg-white text-[10px]" />
          <Tools items="| print slide movie film | edit split windows+ | tree | zoomData zoomGraph results script gear | addCol" />
        </Bar>
        <Bar>
          <Tools items="sumCols sumRows sort | setVals | stats1 stats2 stats3 | filter filterOff filterRun" />
        </Bar>
        <Bar>
          <Tools items="x y! z err none | first prev next last" />
        </Bar>
        <Bar cap={false} className="flex-1">
          <Tools items="db dbEdit dbOpen dbSql dbTable dbPlain" />
        </Bar>
      </div>
      <div className="flex h-[22px] shrink-0 overflow-hidden border-b border-[#8b8b96]">
        <Bar>
          <Tools items="import1 import2 import3 importXl | reimp1 reimp2 reimp3 | batch" />
          <span className="w-[2px]" />
        </Bar>
        <Bar>
          <Tools items="cut copy paste" />
        </Bar>
        <Bar>
          <Combo label="字体" value="默认: 宋体" className="w-[104px] bg-[#f0f0f3] text-[11px] text-[#777]" icon={<span className="pl-1 font-['Liberation_Serif',serif] font-bold text-black">Tp</span>} />
          <Combo label="字号" value="0" className="w-[48px] bg-[#f0f0f3] text-[10px] text-[#999]" />
          <span className="w-[6px]" />
          <Tools items="bold italic underline sup sub supsub greek bigger smaller align+ valign+ fontColor++" />
        </Bar>
        <Bar>
          <Tools items="fill++ palette++ lineColor++ lamp" />
          <Combo label="线型" value="———" className="w-[48px] bg-white text-[10px]" />
          <Combo label="线宽" value="0" className="w-[48px] bg-[#f0f0f3] text-[10px] text-[#999]" />
          <button type="button" aria-label="图案颜色" className="mr-px ml-[2px] flex h-4 w-[42px] shrink-0 items-center justify-between">
            <span className="h-[14px] w-[34px] border border-[#b9b9c2] bg-[#f0f0f5]" />
            <Caret className="text-[#777]" />
          </button>
          <Combo label="图案宽度" value="0" className="w-[48px] bg-[#f0f0f3] text-[10px] text-[#999]" />
          <Tools items="hatch+ border+ cells" />
        </Bar>
        <Bar cap={false} className="flex-1">
          <Tools items="mask1 mask2 | move1 move2 | cube" />
        </Bar>
      </div>

      <div className="flex min-h-0 flex-1">
        {/* Left docks */}
        <div className="flex w-[17px] shrink-0 flex-col gap-[2px] pt-[2px] pr-[3px]">
          {dockTabs.map((tab) => (
            <button key={tab.text} type="button" className={clsx("flex w-[14px] shrink-0 items-center border-y border-r border-[#dcdce6] bg-[#f1f1f1] pt-1 text-[11px] leading-[12px] [text-orientation:sideways] [writing-mode:vertical-rl]", tab.height, tab.color)}>
              {tab.text}
            </button>
          ))}
        </div>
        <div className="flex w-[31px] shrink-0 flex-col gap-[3px] pt-[2px]">
          <div className="w-[29px] rounded-r bg-linear-to-r from-[#f8f8fd] via-[#ebebf4] to-[#bebecd] pt-px">
            <span className="mb-[2px] ml-1 block w-5 border-t-2 border-dotted border-[#a4a4b4]" />
            <Tools vertical items="pointer! zoomIn zoomOut reader screen+ cursor selArea+ maskArea+ draw text annotate arrow+ line+ rect+ hand formula+ newGraph+ pan cube" />
            <SideCap />
          </div>
          <div className="w-[22px] overflow-hidden rounded-r bg-linear-to-r from-[#f8f8fd] via-[#ebebf4] to-[#bebecd] pt-[2px]">
            <span className="mb-px ml-1 block w-3 border-t-2 border-dotted border-[#a4a4b4]" />
            <Tools vertical items="lines ring legend bracket colorScale clock stamp newTable" />
            <SideCap />
          </div>
        </div>

        {/* Graph window and plot toolbar */}
        <main className="flex min-w-0 flex-1 flex-col">
          <div className="flex min-h-0 flex-1 overflow-hidden border-t border-l-2 border-[#8b8b96] bg-[#c0c0c0]">
            <div className="relative h-full w-[778px] bg-white">
              <span className="absolute top-0 left-0 h-[17px] w-4 bg-[#c4c4c4] text-center font-['Liberation_Sans',sans-serif] text-[11px] leading-[18px] font-bold">1</span>
              <Plot />
            </div>
          </div>
          <div className="flex h-[23px] shrink-0 overflow-hidden">
            <Bar>
              <Tools items="pLine+ pDots+ pBoth+ pCol+ pMulti+ pBox+ pArea+ pPolar+ pStock+ pTpl" />
              <span className="w-px" />
            </Bar>
            <Bar>
              <Tools items="p3d+ | p3dRibbon+ p3dSurf+ p3dGrid+ pHeat+ pImage" />
              <span className="w-[2px]" />
            </Bar>
            <Bar>
              <Tools items="m1 m2 | m3 m4 m5 | m6" />
              <span className="w-[3px]" />
            </Bar>
            <div className="flex-1 bg-black" />
            <Bar className="w-[217px]">
              <Tools items="r1 r2 r3 r4 r5 r6 r7 r8 r9 r10" />
              <span className="flex-1" />
            </Bar>
          </div>
        </main>

        {/* Right docks */}
        <div className="flex w-[26px] shrink-0 flex-col gap-[2px] border-l border-white">
          <div className="bg-linear-to-r from-[#f8f8fd] via-[#ebebf4] to-[#bebecd] pt-[2px] pl-px">
            <span className="mb-[3px] ml-1 block w-5 border-t-2 border-dotted border-[#a4a4b4]" />
            <Tools vertical items="antialias axis1 axis2 axis3 exchange speed! | layer1 layer2 layer3 layer4 | addL addT addR addBox addInset addInset2" />
            <SideCap />
          </div>
          <div className="w-[22px] bg-linear-to-r from-[#f8f8fd] via-[#ebebf4] to-[#bebecd] pt-[2px] pl-px">
            <span className="mb-[2px] ml-1 block w-3 border-t-2 border-dotted border-[#a4a4b4]" />
            <Tools vertical items="alignL alignR | alignT alignB | alignH alignV | sameW sameH | distH distV front back | group" />
            <SideCap />
          </div>
        </div>
      </div>

      {/* Status bar */}
      <footer className="flex h-[17px] shrink-0 items-center justify-end gap-[6px] border-t border-[#d8d8d8] bg-[#f0f0f0] pr-[148px] text-[10px]">
        <span className="border-r border-[#ccc] pr-2">--</span>
        <span>AU : 开</span>
        <span>Ligh</span>
      </footer>
      <div className="flex h-[5px] shrink-0 bg-linear-to-r from-[#15304a] via-[#35566e] to-[#12304a]">
        <span className="ml-[288px] w-10 bg-[#1e6fae]" />
      </div>

      <InputMethodBar />
      <ExportDialog />
    </div>
  )
}
